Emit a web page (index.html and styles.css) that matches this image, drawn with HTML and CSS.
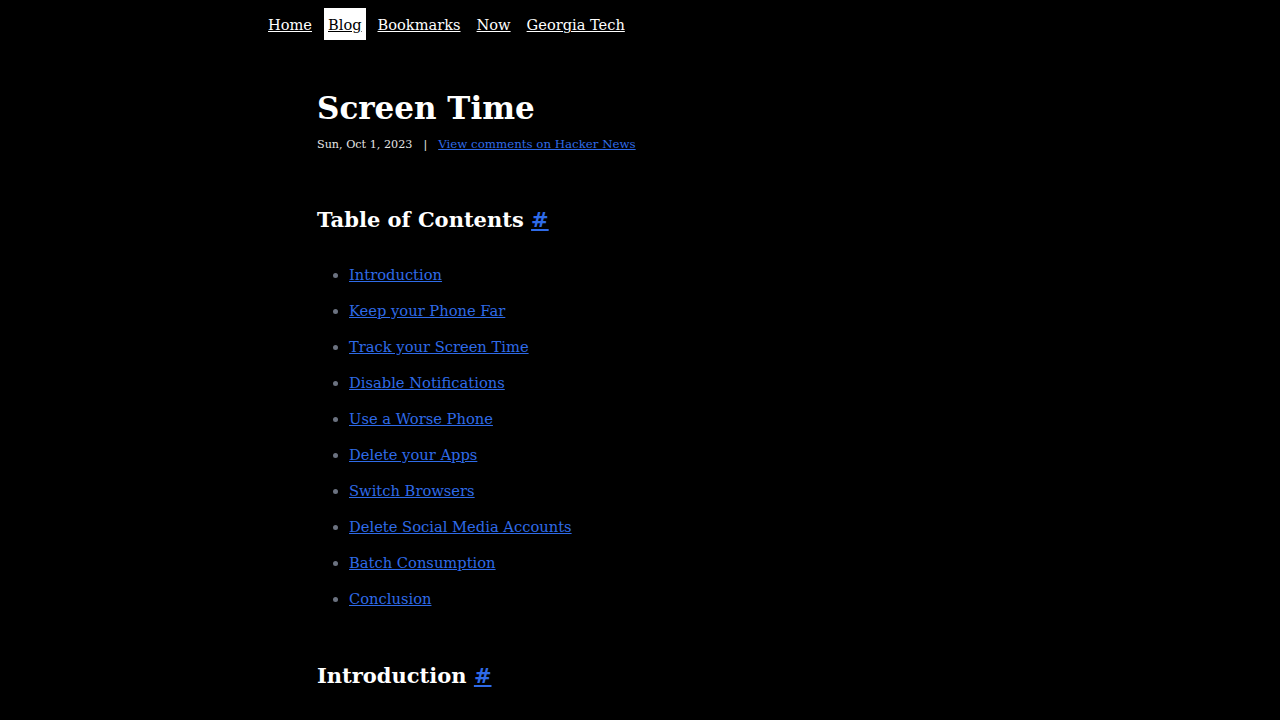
FILE: index.html
```
<!DOCTYPE html>
<html lang="en">
<head>
<meta charset="utf-8">
<title>Screen Time</title>
<link rel="stylesheet" href="styles.css">
</head>
<body>
<div class="wrap">
  <nav class="nav">
    <a href="#">Home</a>
    <a href="#" class="active">Blog</a>
    <a href="#">Bookmarks</a>
    <a href="#">Now</a>
    <a href="#">Georgia Tech</a>
  </nav>
  <main class="post">
    <h1 class="title">Screen Time</h1>
    <div class="meta"><span>Sun, Oct 1, 2023</span><span class="sep">|</span><a href="#">View comments on Hacker News</a></div>
    <h2 class="h2">Table of Contents <a href="#">#</a></h2>
    <ul class="toc">
      <li><a href="#">Introduction</a></li>
      <li><a href="#">Keep your Phone Far</a></li>
      <li><a href="#">Track your Screen Time</a></li>
      <li><a href="#">Disable Notifications</a></li>
      <li><a href="#">Use a Worse Phone</a></li>
      <li><a href="#">Delete your Apps</a></li>
      <li><a href="#">Switch Browsers</a></li>
      <li><a href="#">Delete Social Media Accounts</a></li>
      <li><a href="#">Batch Consumption</a></li>
      <li><a href="#">Conclusion</a></li>
    </ul>
    <h2 class="h2 intro">Introduction <a href="#">#</a></h2>
  </main>
</div>
</body>
</html>
```
FILE: styles.css
```
html, body { margin: 0; padding: 0; background: #000; }
body { font-family: "DejaVu Serif", "Liberation Serif", serif; color: #fff; }
.wrap { width: 752px; margin: 0 auto; }
.nav { display: flex; gap: 8px; padding-top: 8px; font-size: 14.6px; }
.nav a { color: #fff; text-decoration: underline; padding: 6px 4px 4px; line-height: 22px; }
.nav a.active { background: #fff; color: #000; }
.post { padding-left: 53px; }
.title { font-size: 31px; font-weight: bold; margin: 48px 0 0; line-height: 40px; }
.meta { font-size: 11.2px; color: #e5e5e5; margin-top: 9px; display: flex; align-items: center; }
.meta .sep { margin: 0 11px; }
.meta a { color: #2f6be8; font-size: 11.8px; }
.h2 { font-size: 21px; font-weight: bold; margin: 54px 0 0; line-height: 30px; }
.h2 a { color: #2f6be8; }
.toc { margin: 22px 0 0; padding-left: 32px; font-size: 14.7px; }
.toc li { line-height: 36px; }
.toc li::marker { color: #6b7280; }
.toc a { color: #2f6be8; }
.intro { margin-top: 44px; }
```
